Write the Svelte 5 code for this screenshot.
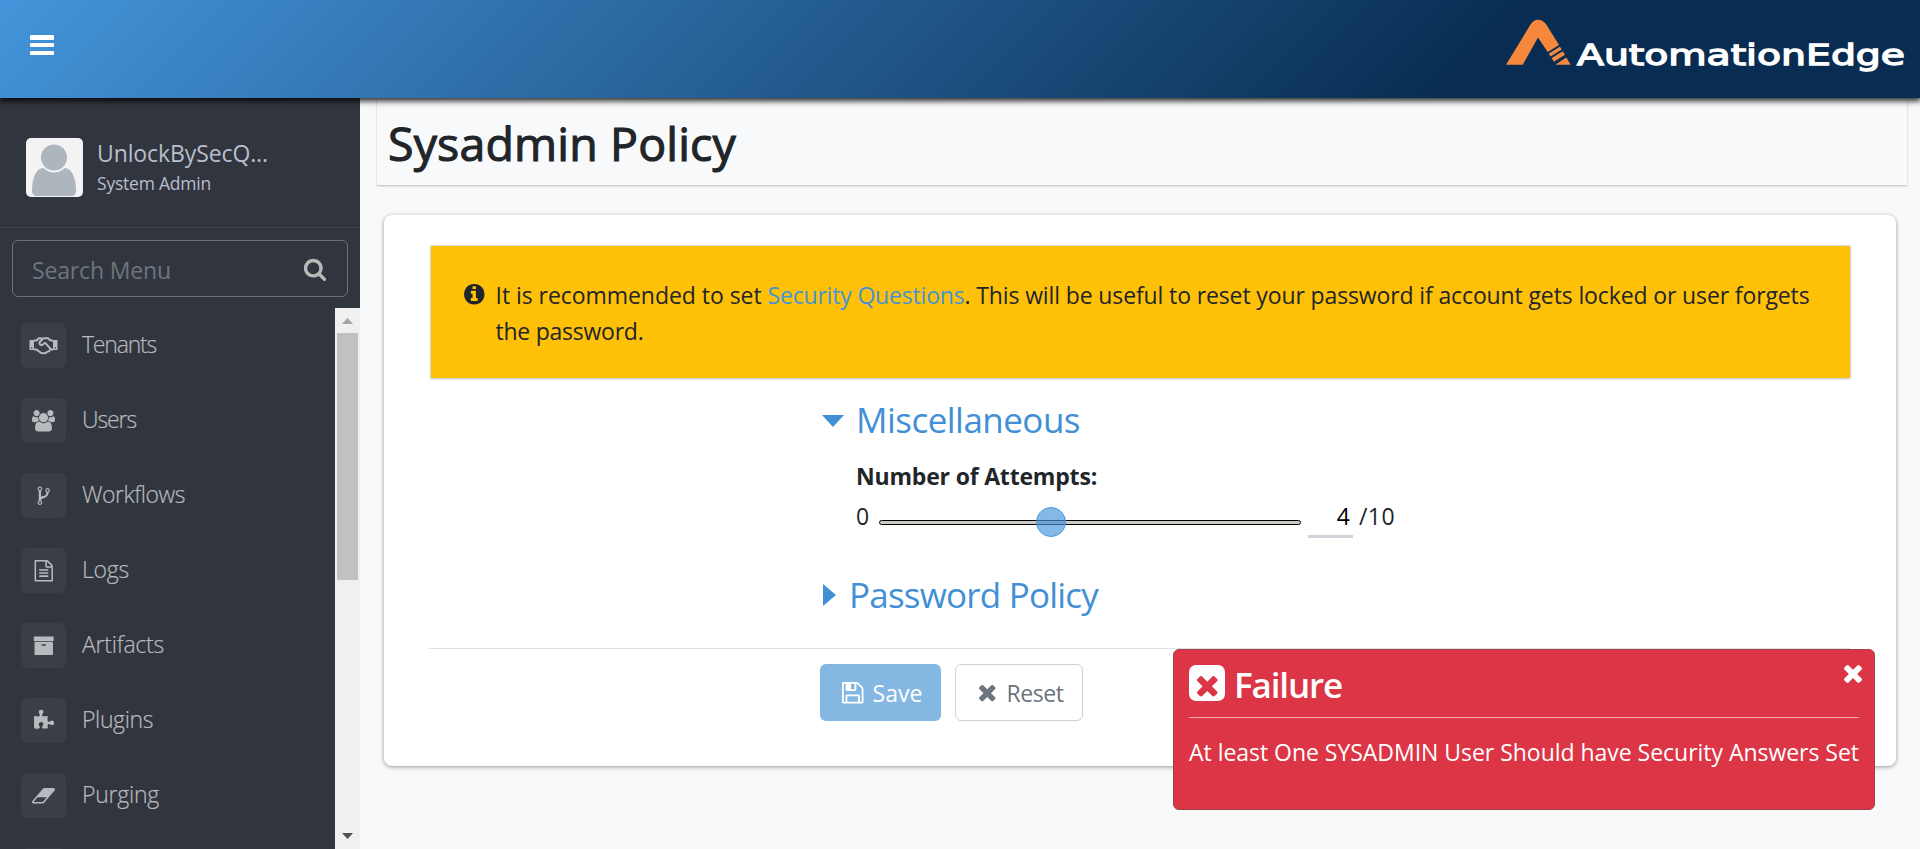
<script>
  const icons = {
    search: { box: '0 0 1792 1792', d: 'M1216 832q0-185-131.5-316.5t-316.5-131.5-316.5 131.5-131.5 316.5 131.5 316.5 316.5 131.5 316.5-131.5 131.5-316.5zm512 832q0 52-38 90t-90 38q-54 0-90-38l-343-342q-179 124-399 124-143 0-273.5-55.5t-225-150-150-225-55.5-273.5 55.5-273.5 150-225 225-150 273.5-55.5 273.5 55.5 225 150 150 225 55.5 273.5q0 220-124 399l343 343q37 37 37 90z' },
    times: { box: '302 302 1188 1188', d: 'M1490 1322q0 40-28 68l-136 136q-28 28-68 28t-68-28l-294-294-294 294q-28 28-68 28t-68-28l-136-136q-28-28-28-68t28-68l294-294-294-294q-28-28-28-68t28-68l136-136q28-28 68-28t68 28l294 294 294-294q28-28 68-28t68 28l136 136q28 28 28 68t-28 68l-294 294 294 294q28 28 28 68z' },
    info: { box: '128 128 1536 1536', d: 'M1152 1376v-160q0-14-9-23t-23-9h-96v-512q0-14-9-23t-23-9h-320q-14 0-23 9t-9 23v160q0 14 9 23t23 9h96v320h-96q-14 0-23 9t-9 23v160q0 14 9 23t23 9h448q14 0 23-9t9-23zm-128-896v-160q0-14-9-23t-23-9h-192q-14 0-23 9t-9 23v160q0 14 9 23t23 9h192q14 0 23-9t9-23zm640 416q0 209-103 385.5t-279.5 279.5-385.5 103-385.5-103-279.5-279.5-103-385.5 103-385.5 279.5-279.5 385.5-103 385.5 103 279.5 279.5 103 385.5z' },
    save: { box: '128 128 1536 1536', d: 'M512 1536h768v-384h-768v384zm896 0h128v-896q0-14-10-38.5t-20-34.5l-281-281q-10-10-34-20t-39-10v416q0 40-28 68t-68 28h-576q-40 0-68-28t-28-68v-416h-128v1280h128v-416q0-40 28-68t68-28h832q40 0 68 28t28 68v416zm-384-928v-320q0-13-9.5-22.5t-22.5-9.5h-192q-13 0-22.5 9.5t-9.5 22.5v320q0 13 9.5 22.5t22.5 9.5h192q13 0 22.5-9.5t9.5-22.5zm640 32v928q0 40-28 68t-68 28h-1344q-40 0-68-28t-28-68v-1344q0-40 28-68t68-28h928q40 0 88 20t76 48l280 280q28 28 48 76t20 88z' },
    users: { box: '0 0 1920 1792', d: 'M593 896q-162 5-265 128h-134q-82 0-138-40.5t-56-118.5q0-353 124-353 6 0 43.5 21t97.5 42.5 119 21.5q67 0 133-23-5 37-5 66 0 139 81 256zm1071 637q0 120-73 189.5t-194 69.5h-874q-121 0-194-69.5t-73-189.5q0-53 3.5-103.5t14-109 26.5-108.5 43-97.5 62-81 85.5-53.5 111.5-20q10 0 43 21.5t73 48 107 48 135 21.5 135-21.5 107-48 73-48 43-21.5q61 0 111.5 20t85.5 53.5 62 81 43 97.5 26.5 108.5 14 109 3.5 103.5zm-1024-1277q0 106-75 181t-181 75-181-75-75-181 75-181 181-75 181 75 75 181zm704 384q0 159-112.5 271.5t-271.5 112.5-271.5-112.5-112.5-271.5 112.5-271.5 271.5-112.5 271.5 112.5 112.5 271.5zm576 225q0 78-56 118.5t-138 40.5h-134q-103-123-265-128 81-117 81-256 0-29-5-66 66 23 133 23 59 0 119-21.5t97.5-42.5 43.5-21q124 0 124 353zm-128-609q0 106-75 181t-181 75-181-75-75-181 75-181 181-75 181 75 75 181z' },
    fork: { box: '0 0 1792 1792', d: 'M672 1472q0-40-28-68t-68-28-68 28-28 68 28 68 68 28 68-28 28-68zm0-1152q0-40-28-68t-68-28-68 28-28 68 28 68 68 28 68-28 28-68zm640 128q0-40-28-68t-68-28-68 28-28 68 28 68 68 28 68-28 28-68zm96 0q0 52-26 96.5t-70 69.5q-2 287-226 414-67 38-203 81-128 40-169.5 71t-41.5 100v26q44 25 70 69.5t26 96.5q0 80-56 136t-136 56-136-56-56-136q0-52 26-96.5t70-69.5v-820q-44-25-70-69.5t-26-96.5q0-80 56-136t136-56 136 56 56 136q0 52-26 96.5t-70 69.5v497q54-26 154-57 55-17 87.5-29.5t70.5-31 59-39.5 40.5-51 28-69.5 8.5-91.5q-44-25-70-69.5t-26-96.5q0-80 56-136t136-56 136 56 56 136z' },
    file: { box: '0 0 1792 1792', d: 'M1596 380q28 28 48 76t20 88v1152q0 40-28 68t-68 28h-1344q-40 0-68-28t-28-68v-1600q0-40 28-68t68-28h896q40 0 88 20t76 48zm-444-244v376h376q-10-29-22-41l-313-313q-12-12-41-22zm384 1528v-1024h-416q-40 0-68-28t-28-68v-416h-768v1536h1280zm-1024-864q0-14 9-23t23-9h704q14 0 23 9t9 23v64q0 14-9 23t-23 9h-704q-14 0-23-9t-9-23v-64zm736 224q14 0 23 9t9 23v64q0 14-9 23t-23 9h-704q-14 0-23-9t-9-23v-64q0-14 9-23t23-9h704zm0 256q14 0 23 9t9 23v64q0 14-9 23t-23 9h-704q-14 0-23-9t-9-23v-64q0-14 9-23t23-9h704z' },
    archive: { box: '0 0 1792 1792', d: 'M1088 832q0-26-19-45t-45-19h-256q-26 0-45 19t-19 45 19 45 45 19h256q26 0 45-19t19-45zm576-192v960q0 26-19 45t-45 19h-1408q-26 0-45-19t-19-45v-960q0-26 19-45t45-19h1408q26 0 45 19t19 45zm64-448v256q0 26-19 45t-45 19h-1536q-26 0-45-19t-19-45v-256q0-26 19-45t45-19h1536q26 0 45 19t19 45z' },
    puzzle: { box: '0 0 1792 1792', d: 'M1755 1083q0 81-44.5 135t-123.5 54q-41 0-77.5-17.5t-59-38-56.5-38-71-17.5q-110 0-110 124 0 39 16 115t15 115v5q-22 0-33 1-34 3-97.5 11.5t-115.5 13.5-98 5q-61 0-103-26.5t-42-83.5q0-37 17.5-71t38-56.5 38-59 17.5-77.5q0-79-54-123.5t-135-44.5q-84 0-143 45.5t-59 127.5q0 43 15 83t33.5 64.5 33.5 53 15 50.5q0 45-46 89-37 35-117 35-95 0-245-24-9-2-27.5-4t-27.5-4l-13-2q-1 0-3-1-2 0-2-1v-1024q2 1 17.5 3.5t34 5 21.5 3.5q150 24 245 24 80 0 117-35 46-44 46-89 0-22-15-50.5t-33.5-53-33.5-64.5-15-83q0-82 59-127.5t144-45.5q80 0 134 44.5t54 123.5q0 41-17.5 77.5t-38 59-38 56.5-17.5 71q0 57 42 83.5t103 26.5q64 0 180-15t163-17v2q-1 2-3.5 17.5t-5 34-3.5 21.5q-24 150-24 245 0 80 35 117 44 46 89 46 22 0 50.5-15t53-33.5 64.5-33.5 83-15q82 0 127.5 59t45.5 143z' },
    eraser: { box: '64 0 1920 1792', d: 'M960 1408l336-384h-768l-336 384h768zm1013-1077q15 34 9.5 71.5t-30.5 65.5l-896 1024q-38 44-96 44h-768q-38 0-69.5-20.5t-47.5-54.5q-15-34-9.5-71.5t30.5-65.5l896-1024q38-44 96-44h768q38 0 69.5 20.5t47.5 54.5z' }
  };

  const menu = [
    { label: 'Tenants', icon: 'handshake', width: 74 },
    { label: 'Users', icon: 'users', width: 54 },
    { label: 'Workflows', icon: 'fork', width: 103 },
    { label: 'Logs', icon: 'file', width: 47 },
    { label: 'Artifacts', icon: 'archive', width: 82 },
    { label: 'Plugins', icon: 'puzzle', width: 71 },
    { label: 'Purging', icon: 'eraser', width: 77 },
    { label: '', icon: '', width: 0 }
  ];

  const attempts = 4;
  const maxAttempts = 10;

  // Tracks a line of text so that it takes the given width.
  function fit(node, width) {
    const natural = node.getBoundingClientRect().width;
    const count = node.textContent.length;
    node.style.letterSpacing = `${(width - natural) / count}px`;
  }
</script>

{#snippet icon(name, w, h = w)}
  <svg class="icon" width={w} height={h} viewBox={icons[name].box} fill="currentColor" aria-hidden="true"><path d={icons[name].d} /></svg>
{/snippet}

<div class="page">
  <header class="topbar">
    <button class="burger" aria-label="Toggle menu"><i></i><i></i><i></i></button>
    <svg class="brand" width="404" height="60" viewBox="0 0 404 60" role="img">
      <g fill="#f5883d">
        <path d="M1 49.800 25.500 9.500Q28.500 4.800 33 4.800Q38 4.800 41.300 9.500L54 30 42.700 37 33 22.500 17.700 49.800Z" />
        <path d="M43.800 38.500 55 31.700 56.700 34.500 45.600 41.500ZM46.700 43 57.800 36.200 60 39.700 48.800 46.700ZM50.300 49.800 61.300 42.500 65.700 49.800Z" />
      </g>
      <text x="72" y="49.500" textLength="328" lengthAdjust="spacingAndGlyphs">AutomationEdge</text>
    </svg>
  </header>

  <div class="body">
    <aside>
      <div class="profile">
        <svg class="avatar" width="57" height="59" viewBox="0 0 57 59" aria-hidden="true">
          <rect width="57" height="59" rx="5" fill="#f3f3f3" />
          <path d="M6 53C6 42 9 30 18 30H38C47 30 50 42 50 53Q50 58 45 58H11Q6 58 6 53Z" fill="#adb5bd" />
          <circle cx="28" cy="20" r="14.500" fill="#f3f3f3" />
          <circle cx="28" cy="19.500" r="13" fill="#adb5bd" />
        </svg>
        <div class="who">
          <div class="name"><span use:fit={171}>UnlockBySecQ...</span></div>
          <div class="role"><span use:fit={114}>System Admin</span></div>
        </div>
      </div>
      <div class="search">
        <span use:fit={139}>Search Menu</span>
        {@render icon('search', 24)}
      </div>
      <div class="menu">
        <nav>
          {#each menu as item}
            <div class="item">
              <span class="tile">
                {#if item.icon === 'handshake'}
                  <svg width="29" height="20" viewBox="0 0 29 20" aria-hidden="true">
                    <path d="M.500 4H5V14H.500ZM24 4H28.500V14H24Z" fill="#b8babd" />
                    <path d="M5 4.500H7.500L10 2.200H13M24 4.500H21.500L19 2.200H14.500L10.500 6.200Q10.300 9.500 13.200 9L16.200 6.800 21.500 12.800M24 13.500H21.300Q20.500 15.800 18.300 15.700Q16.500 17.600 14.300 17.200Q12.500 17.700 10.500 15.800L7.500 13.500H5" fill="none" stroke="#b8babd" stroke-width="2" stroke-linejoin="round" />
                    <circle cx="2.700" cy="12" r=".8" fill="#3a3e47" /><circle cx="26.300" cy="12" r=".8" fill="#3a3e47" />
                  </svg>
                {:else if item.icon}
                  {@render icon(item.icon, item.icon === 'users' || item.icon === 'eraser' ? 23 : 21.500, 21.500)}
                {/if}
              </span>
              {#if item.label}<span class="label" use:fit={item.width}>{item.label}</span>{/if}
            </div>
          {/each}
        </nav>
        <div class="scroll">
          <svg width="25" height="25" aria-hidden="true"><path d="M7 16H18L12.500 10Z" fill="#a3a3a3" /></svg>
          <div class="handle"></div>
          <svg class="down" width="25" height="25" aria-hidden="true"><path d="M7 9H18L12.500 15Z" fill="#505050" /></svg>
        </div>
      </div>
    </aside>

    <main>
      <div class="title"><h1><span use:fit={348}>Sysadmin Policy</span></h1></div>
      <section class="card">
        <div class="banner">
          {@render icon('info', 20.500)}
          <div class="message">
            <div><span use:fit={272}>It is recommended to set&nbsp;</span><a href="#questions" use:fit={197}>Security Questions</a><span use:fit={845}>. This will be useful to reset your password if account gets locked or user forgets</span></div>
            <div><span use:fit={148}>the password.</span></div>
          </div>
        </div>

        <div class="form">
          <h2><svg class="open" width="22" height="12" viewBox="0 0 22 12"><path d="M0 0H22L11 12Z" fill="currentColor" /></svg><span use:fit={224}>Miscellaneous</span></h2>
          <div class="field"><span use:fit={241}>Number of Attempts:</span></div>
          <div class="slider">
            <span class="min">0</span>
            <div class="track"><i style="left: {attempts / maxAttempts * 91.500 + 4.200}%"></i></div>
            <span class="value">{attempts}</span>
            <span class="max" use:fit={36}>/{maxAttempts}</span>
          </div>
          <h2 class="closed"><svg width="13" height="22" viewBox="0 0 13 22"><path d="M0 0 13 11 0 22Z" fill="currentColor" /></svg><span use:fit={249}>Password Policy</span></h2>
        </div>

        <div class="actions">
          <button class="save">{@render icon('save', 21.500)}<span use:fit={50}>Save</span></button>
          <button class="reset">{@render icon('times', 16.500)}<span use:fit={57}>Reset</span></button>
        </div>
      </section>
    </main>
  </div>

  <div class="toast" role="alert">
    <div class="toast-head">
      <span class="square">{@render icon('times', 20.500)}</span>
      <strong use:fit={108}>Failure</strong>
      <span class="close">{@render icon('times', 18)}</span>
    </div>
    <p><span use:fit={670}>At least One SYSADMIN User Should have Security Answers Set</span></p>
  </div>
</div>

<style>
  :global(body) { margin: 0; overflow: hidden; }
  .page {
    position: relative; width: 1920px; height: 849px; overflow: hidden;
    display: flex; flex-direction: column;
    font: 400 23px/36px "Open Sans", "Noto Sans", sans-serif;
    color: #212529; background: #f8f9fb;
  }
  .page * { box-sizing: border-box; }
  span, a { white-space: nowrap; }
  .icon { display: block; flex: none; overflow: visible; }
  button { font: inherit; margin: 0; }

  .topbar {
    position: relative; z-index: 2; flex: none; height: 98px;
    display: flex; justify-content: space-between; align-items: flex-start;
    padding: 35px 11px 0 30px;
    background: linear-gradient(135deg, #4495db 0%, #092d52 76%);
    box-shadow: 0 2px 6px 1px rgba(0, 0, 0, .85);
  }
  .burger { width: 24px; height: 20px; padding: 0; border: 0; background: none; display: flex; flex-direction: column; justify-content: space-between; }
  .burger i { height: 4.500px; border-radius: 1px; background: #fff; }
  .brand { margin-top: -20px; }
  .brand text { font: 400 29px "DejaVu Sans", sans-serif; fill: #fff; stroke: #fff; stroke-width: 1.300px; }

  .body { flex: 1; min-height: 0; display: flex; }
  aside { width: 360px; flex: none; display: flex; flex-direction: column; background: #31353d; }
  .profile { height: 130px; flex: none; display: flex; padding: 40px 0 0 26px; gap: 14px; border-bottom: 1px solid #3e424b; color: #b8bfce; }
  .who { line-height: 30px; }
  .name { height: 30px; }
  .role { font-size: 17.500px; line-height: 26px; margin-top: 2px; }
  .search {
    flex: none; height: 57px; margin: 12px 12px 11px; padding: 0 20px 0 19px;
    display: flex; align-items: center; justify-content: space-between;
    border: 1px solid #6d7178; border-radius: 6px; color: #6c757d;
  }
  .search span { padding-top: 2px; }
  .search .icon { color: #b8b8b8; }
  .menu { flex: 1; min-height: 0; display: flex; justify-content: space-between; overflow: hidden; }
  nav { padding: 15px 0 0 21px; }
  .item { height: 75px; display: flex; align-items: flex-start; gap: 16px; color: #b8babd; font-weight: 300; }
  .tile { width: 45px; height: 45px; display: flex; align-items: center; justify-content: center; border-radius: 6px; background: #3a3e47; }
  .label { line-height: 42px; -webkit-text-stroke: .2px #b8babd; }
  .scroll { width: 25px; display: flex; flex-direction: column; background: #f0f0f0; }
  .scroll svg { display: block; flex: none; }
  .handle { height: 247px; margin: 0 2px; background: #c1c1c1; }
  .down { margin-top: auto; }

  main { flex: 1; padding: 0 13px 0 17px; }
  .title { height: 87px; padding: 15px 0 0 11px; box-shadow: 0 1px 2px rgba(0, 0, 0, .25); }
  h1 { margin: 0; font-size: 46.500px; line-height: 60px; font-weight: 400; -webkit-text-stroke: 1.100px #212529; }
  .card {
    height: 551px; margin: 30px 11px 0 7px; padding: 30.500px 46px 0 45px;
    background: #fff; border-radius: 8px; box-shadow: 0 1px 4px rgba(0, 0, 0, .4);
  }
  .banner {
    height: 132px; margin-left: 2px; padding: 31px 0 0 32.500px; display: flex; gap: 11.500px;
    background: #ffc107; border-radius: 1px; box-shadow: 0 0 1px 1px rgba(0, 0, 0, .12), 0 1px 2px 1px rgba(0, 0, 0, .1);
  }
  .banner .icon { margin-top: 7px; }
  .message > div { white-space: nowrap; height: 36px; }
  a { color: #4493d8; text-decoration: none; }
  .form { height: 270px; padding: 21.500px 0 0 394px; }
  h2 { margin: 0; height: 42px; display: flex; align-items: flex-start; gap: 11px; font-size: 35px; line-height: 42px; font-weight: 400; color: #4190d6; }
  h2 svg { margin-top: 10px; }
  h2 .open { margin-top: 16px; margin-left: -1px; margin-right: 1px; }
  .field { margin: 17px 0 4px 33px; font-weight: 700; }
  .slider { height: 40px; margin-left: 33px; display: flex; }
  .min { width: 23px; }
  .track { position: relative; width: 422px; height: 5px; margin-top: 21.500px; border: 1px solid #000; border-radius: 3px; background: #c9ccc4; }
  .track i { position: absolute; top: 50%; width: 30px; height: 30px; border-radius: 50%; background: rgba(68, 147, 218, .66); border: 1px solid #4c97da; transform: translate(-50%, -50%); }
  .value { width: 45px; height: 39.500px; margin-left: 7px; padding-right: 3px; text-align: right; color: #000; border-bottom: 3px solid #ced4da; }
  .max { margin-left: 6px; }
  .closed { margin-top: 35.500px; gap: 13px; }
  .actions { display: flex; gap: 14px; height: 90px; padding: 15.500px 0 0 391px; border-top: 1px solid #dfdfdf; }
  .actions button { height: 57px; display: flex; align-items: center; border-radius: 6px; }
  .save { width: 121px; padding: 0 0 0 22px; gap: 9px; border: 0; color: #fff; background: #85b7e3; }
  .reset { width: 128px; padding: 0 0 0 23px; gap: 11px; border: 1px solid #ced0da; color: #6c757d; background: #fff; }
  .actions span { padding-top: 1px; }

  .toast {
    position: absolute; z-index: 3; left: 1173px; top: 649px; width: 702px; height: 161px; padding: 15px;
    color: #fff; background: #dc3545; border: 1px solid #a14248; border-radius: 6px;
  }
  .toast-head { height: 53px; display: flex; align-items: flex-start; border-bottom: 1px solid #f2b0b6; }
  .square { width: 36px; height: 36px; display: flex; align-items: center; justify-content: center; padding-top: 4px; border-radius: 7px; background: #fff; color: #dc3545; }
  .toast strong { margin-left: 9px; font-size: 35px; line-height: 39px; font-weight: 600; }
  .close { margin: -1px -3px 0 auto; }
  p { margin: 16px 0 0; }
</style>
